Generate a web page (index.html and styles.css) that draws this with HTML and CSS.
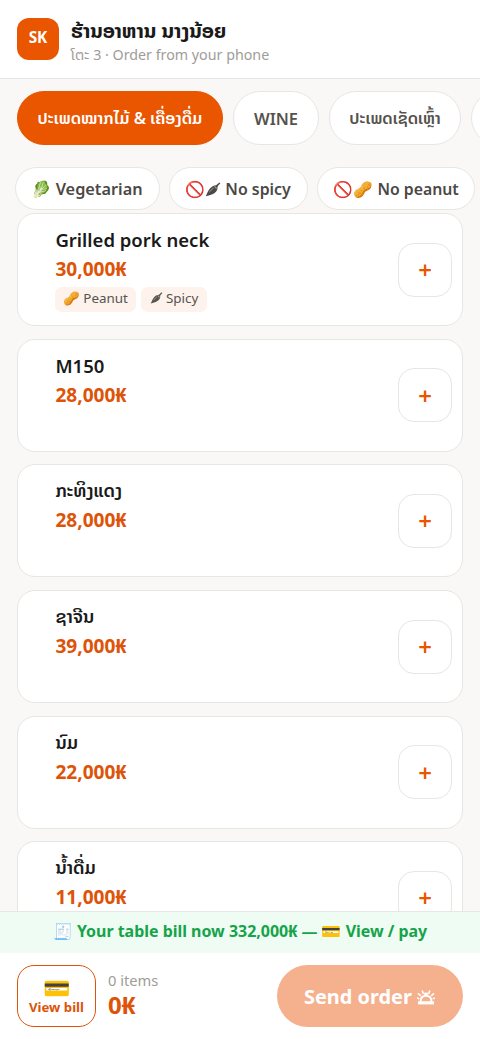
FILE: index.html
```html
<!DOCTYPE html>
<html lang="en">
<head>
<meta charset="utf-8">
<title>Order</title>
<link rel="stylesheet" href="styles.css">
</head>
<body>
<svg class="defs" width="0" height="0">
  <symbol id="pepper" viewBox="0 0 16 16">
    <path d="M0.3 15.2C1.8 12.5 2.4 9.5 5 6.6C7 4.5 9.3 3.6 11.3 3.5L14.8 0.4L15.8 1.3L13 4.6C13.3 7.5 12.2 9.9 9.8 11.7C6.8 13.9 3.2 14.2 0.3 15.2Z" fill="currentColor"/>
    <path d="M4 10.6C5.8 9.8 6.8 7.2 8.6 6.2M9.8 4.2L10.9 6.6L13.3 6.4" fill="none" stroke="#fff" stroke-width="0.5"/>
  </symbol>
</svg>
<div class="app">
  <header class="header">
    <div class="logo">SK</div>
    <div class="heading">
      <div class="shop">ຮ້ານອາຫານ ນາງນ້ອຍ</div>
      <div class="table">ໂຕະ 3 · Order from your phone</div>
    </div>
  </header>
  <nav class="cats">
    <button class="cat active">ປະເພດໝາກໄມ້ &amp; ເຄື່ອງດື່ມ</button>
    <button class="cat wine">WINE</button>
    <button class="cat liquor">ປະເພດເຊັດເຫຼົ້າ</button>
    <button class="cat more" aria-label="More"></button>
  </nav>
  <div class="filters">
    <button class="filter veg">🥬 Vegetarian</button>
    <button class="filter spicy">🚫<svg class="pepper"><use href="#pepper"/></svg> No spicy</button>
    <button class="filter peanut">🚫🥜 No peanut</button>
  </div>
  <main class="menu">
    <article class="item"><div class="info"><div class="name">Grilled pork neck</div><div class="price">30,000₭</div><div class="tags"><span class="tag t1">🥜 Peanut</span><span class="tag t2"><svg class="pepper small"><use href="#pepper"/></svg> Spicy</span></div></div><button class="add">+</button></article>
    <article class="item"><div class="info"><div class="name">M150</div><div class="price">28,000₭</div></div><button class="add">+</button></article>
    <article class="item"><div class="info"><div class="name lao">ກະທິງແດງ</div><div class="price">28,000₭</div></div><button class="add">+</button></article>
    <article class="item"><div class="info"><div class="name lao">ຊາຈີນ</div><div class="price">39,000₭</div></div><button class="add">+</button></article>
    <article class="item"><div class="info"><div class="name lao">ນົມ</div><div class="price">22,000₭</div></div><button class="add">+</button></article>
    <article class="item"><div class="info"><div class="name lao">ນ້ຳດື່ມ</div><div class="price">11,000₭</div></div><button class="add">+</button></article>
  </main>
  <footer class="footer">
    <div class="bill">🧾 Your table bill now 332,000₭ — 💳 View / pay</div>
    <div class="bar">
      <button class="view"><span class="card">💳</span><span>View bill</span></button>
      <div class="sum"><div class="count">0 items</div><div class="total">0₭</div></div>
      <button class="send">Send order
        <svg class="bell" viewBox="0 0 18 16" fill="none" stroke="currentColor">
          <path d="M1 12.2H17V15.4H1Z" fill="currentColor" stroke="none"/>
          <path d="M3.6 12.6C3.6 8.6 5.5 6.8 9 6.8S14.4 8.6 14.4 12.6" stroke-width="1.9"/>
          <path d="M6.4 5L5.2 1.4M11.6 5L12.8 1.4M3.8 6.9L1 4.4M14.2 6.9L17 4.4M2.2 9.8L0 9M15.8 9.8L18 9" stroke-width="1.5"/>
          <path d="M7.2 3.6H10.8V6.6H7.2Z" fill="currentColor" stroke="none"/>
        </svg>
      </button>
    </div>
  </footer>
</div>
</body>
</html>
```
FILE: styles.css
```css
* { box-sizing: border-box; margin: 0; }
body { font-family: "Noto Sans", "Noto Sans Lao", sans-serif; background: #faf8f6; color: #1a1a1a; }
button { font: inherit; padding: 0; white-space: nowrap; }
.defs { display: block; }
.app { width: 480px; height: 1039px; overflow: hidden; display: flex; flex-direction: column; }
.header { height: 79px; flex: none; background: #fff; border-bottom: 1px solid #e8e6e3; display: flex; align-items: center; gap: 12px; padding-left: 17px; }
.logo { width: 42px; height: 42px; border-radius: 12px; background: #ea5500; color: #fff; font-weight: 700; font-size: 15.4px; line-height: 39px; text-align: center; }
.shop { font-weight: 700; font-size: 20.2px; line-height: 28px; white-space: nowrap; }
.table { font-size: 14.25px; line-height: 22px; color: #a09c98; white-space: nowrap; }
.heading { padding-top: 3px; }
.cats { flex: none; display: flex; gap: 10px; padding: 12px 0 0 17px; height: 67px; }
.cat { flex: none; height: 54px; border-radius: 27px; border: 1px solid #e8e6e3; background: #fff; color: #55524e; font-weight: 600; font-size: 16.5px; }
.cat.active { width: 206px; background: #ea5500; border-color: #ea5500; color: #fff; }
.wine { width: 86px; }
.liquor { width: 132px; }
.more { width: 100px; }
.filters { flex: none; display: flex; gap: 9px; padding: 21px 0 0 15px; height: 65px; }
.filter { flex: none; height: 43px; border-radius: 22px; border: 1px solid #e8e6e3; background: #fff; color: #4b4845; font-weight: 600; font-size: 16.3px; line-height: 38px; }
.veg { width: 145px; padding-right: 1px; }
.spicy { width: 139px; padding-right: 1px; font-size: 15.9px; }
.peanut { width: 158px; font-size: 15.8px; }
.pepper { width: 16px; height: 15px; vertical-align: -2px; }
.pepper.small { width: 13px; height: 12px; vertical-align: -1px; }
.menu { flex: 1; min-height: 0; overflow: hidden; padding: 2px 17px 0; display: flex; flex-direction: column; gap: 12.7px; }
.item { flex: none; height: 113px; border: 1px solid #e8e6e3; border-radius: 18px; background: #fff; display: flex; align-items: center; justify-content: space-between; padding: 0 10px 0 37.4px; }
.info { align-self: flex-start; padding-top: 12px; }
.name { font-weight: 600; font-size: 18.5px; line-height: 28px; }
.name.lao { line-height: 26px; padding-bottom: 2px; font-size: 18.2px; }
.price { font-weight: 700; font-size: 19.1px; line-height: 31px; color: #dd5409; }
.tags { display: flex; gap: 5px; margin-top: 2px; }
.tag { height: 25px; border-radius: 7px; background: #fdf2ec; font-size: 13.4px; line-height: 23px; color: #57534e; text-align: center; white-space: nowrap; padding-right: 1px; }
.t1 { width: 81px; }
.t2 { width: 66px; }
.add { width: 54px; height: 54px; border-radius: 16px; border: 1px solid #e8e6e3; background: #fff; color: #ea5500; font-weight: 600; font-size: 24px; line-height: 51px; }
.footer { flex: none; height: 128px; background: #fff; border-top: 1px solid #e8e6e3; }
.bill { height: 41px; background: #effcf4; color: #16a34a; font-weight: 700; font-size: 15.95px; line-height: 39px; text-align: center; white-space: nowrap; }
.bar { display: flex; padding: 12px 17px 0; }
.view { width: 79px; height: 62px; border: 1px solid #dd5409; border-radius: 17px; background: #fff; color: #dd5409; font-weight: 700; font-size: 13.2px; line-height: 18px; display: flex; flex-direction: column; align-items: center; justify-content: center; }
.card { font-size: 22px; line-height: 22px; }
.sum { margin-left: 12px; flex: 1; padding-top: 3px; }
.count { font-size: 14.7px; line-height: 24px; color: #a09c98; }
.total { font-size: 24px; line-height: 25px; font-weight: 700; color: #dd5409; }
.send { width: 186px; height: 62px; border: 0; border-radius: 31px; background: #f5b18e; color: #fff; font-weight: 700; font-size: 19.9px; padding-right: 1px; }
.bell { width: 18px; height: 16px; vertical-align: -1px; }
```
